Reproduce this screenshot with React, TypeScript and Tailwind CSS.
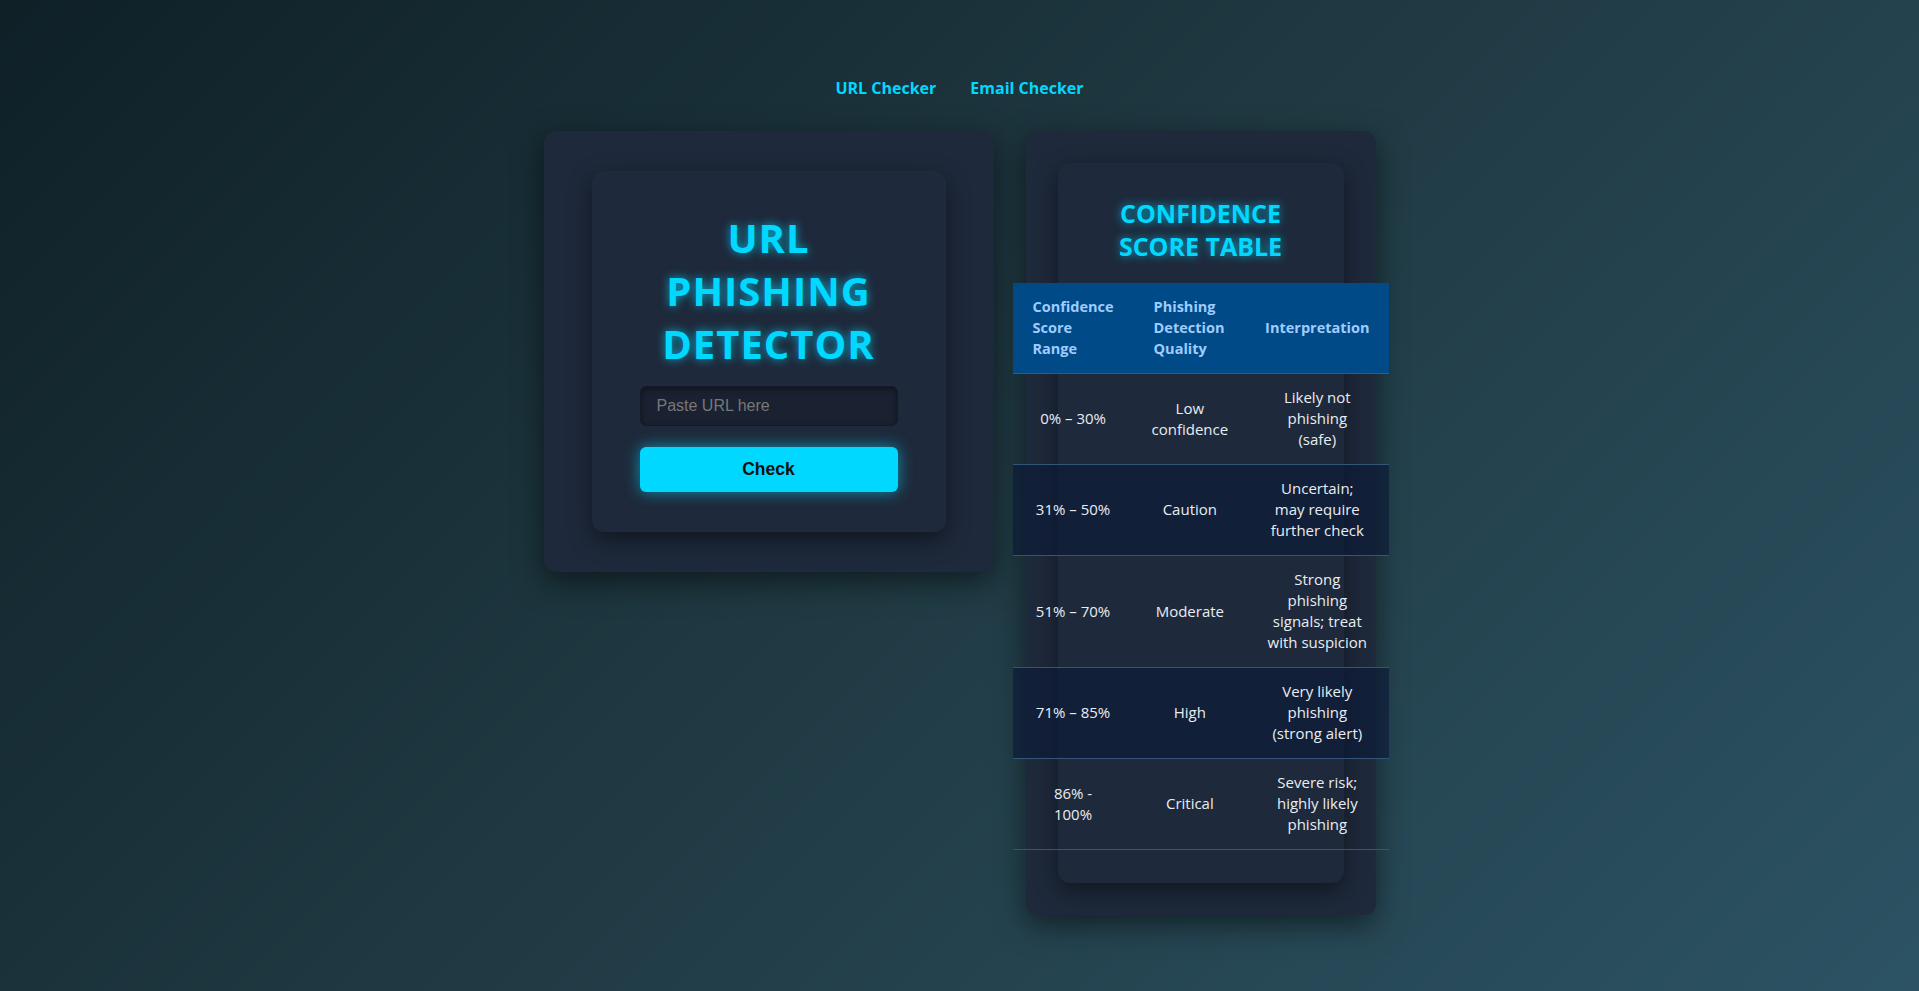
import React from "react";

const rows: { range: React.ReactNode; quality: React.ReactNode; interp: React.ReactNode; shaded: boolean }[] = [
  { range: "0% – 30%", quality: <>Low<br />confidence</>, interp: <>Likely not<br />phishing<br />(safe)</>, shaded: false },
  { range: "31% – 50%", quality: "Caution", interp: <>Uncertain;<br />may require<br />further check</>, shaded: true },
  { range: "51% – 70%", quality: "Moderate", interp: <>Strong<br />phishing<br />signals; treat<br />with suspicion</>, shaded: false },
  { range: "71% – 85%", quality: "High", interp: <>Very likely<br />phishing<br />(strong alert)</>, shaded: true },
  { range: <>86% -<br />100%</>, quality: "Critical", interp: <>Severe risk;<br />highly likely<br />phishing</>, shaded: false },
];

export default function App() {
  return (
    <div className="min-h-screen w-full bg-[linear-gradient(135deg,#0f2027,#203a43,#2c5364)] font-['Open_Sans',sans-serif] flex flex-col items-center">
      <nav className="mt-[75px] flex gap-[34px] text-[16px] leading-[26px] font-bold text-[#00d8ff]">
        <span>URL Checker</span>
        <span>Email Checker</span>
      </nav>

      <div className="mt-[30px] flex items-start gap-8">
        {/* Left card */}
        <div className="w-[450px] px-12 py-10 rounded-xl bg-[#1e293b] shadow-[0_10px_30px_rgba(0,0,0,0.5)]">
          <div className="w-[354px] px-12 py-10 rounded-xl bg-[#1e293b] shadow-[0_8px_24px_rgba(0,0,0,0.45)] flex flex-col items-stretch">
            <h1 className="text-center text-[40px] leading-[53px] font-bold tracking-[1px] text-[#00d8ff] [text-shadow:0_0_10px_rgba(0,216,255,0.75)]">
              URL
              <br />
              PHISHING
              <br />
              DETECTOR
            </h1>
            <input
              type="text"
              placeholder="Paste URL here"
              className="mt-4 h-10 w-full rounded-md border border-[#141b28] bg-[#1a2231] px-4 font-['Liberation_Sans',Arial,sans-serif] text-[16px] text-gray-200 placeholder:text-[#777] shadow-[inset_0_2px_6px_rgba(0,0,0,0.45)] outline-none"
            />
            <button className="mt-[21px] h-[45px] w-full rounded-md bg-[#00d8ff] font-['Liberation_Sans',Arial,sans-serif] text-[17.5px] font-bold text-[#111] shadow-[0_0_15px_rgba(0,216,255,0.6)]">
              Check
            </button>
          </div>
        </div>

        {/* Right card */}
        <div className="w-[350px] p-8 rounded-xl bg-[#1e293b] shadow-[0_10px_30px_rgba(0,0,0,0.5)]">
          <div className="w-[286px] pt-[34px] pb-[33px] rounded-xl bg-[#1e293b] shadow-[0_8px_24px_rgba(0,0,0,0.45)] flex flex-col items-center">
            <h2 className="text-center text-[25px] leading-[33px] font-bold text-[#00d8ff] [text-shadow:0_0_10px_rgba(0,216,255,0.75)]">
              CONFIDENCE
              <br />
              SCORE TABLE
            </h2>
            <table className="mt-5 w-[376px] shrink-0 border-collapse text-[15px] leading-[21px]">
              <colgroup>
                <col className="w-[120px]" />
                <col className="w-[117px]" />
                <col className="w-[139px]" />
              </colgroup>
              <thead>
                <tr className="h-[90px] bg-[#004b87] border-b border-[#2d5b8a]">
                  <th className="px-5 text-left align-middle text-[14.5px] font-bold text-[#9fcbff]">Confidence<br />Score<br />Range</th>
                  <th className="px-5 text-left align-middle text-[14.5px] font-bold text-[#9fcbff]">Phishing<br />Detection<br />Quality</th>
                  <th className="px-[19px] text-left align-middle text-[14.5px] font-bold text-[#9fcbff] whitespace-nowrap">Interpretation</th>
                </tr>
              </thead>
              <tbody>
                {rows.map((r, i) => (
                  <tr
                    key={i}
                    className={
                      (r.shaded ? "bg-[rgba(12,26,56,0.65)] " : "") +
                      "border-b border-[#34557a]"
                    }
                  >
                    <td className="px-2 py-[13.5px] text-center align-middle text-[#e8edf3] whitespace-nowrap">{r.range}</td>
                    <td className="px-2 py-[13.5px] text-center align-middle text-[#e8edf3] whitespace-nowrap">{r.quality}</td>
                    <td className="px-2 py-[13.5px] text-center align-middle text-[#e8edf3] whitespace-nowrap">{r.interp}</td>
                  </tr>
                ))}
              </tbody>
            </table>
          </div>
        </div>
      </div>
    </div>
  );
}
